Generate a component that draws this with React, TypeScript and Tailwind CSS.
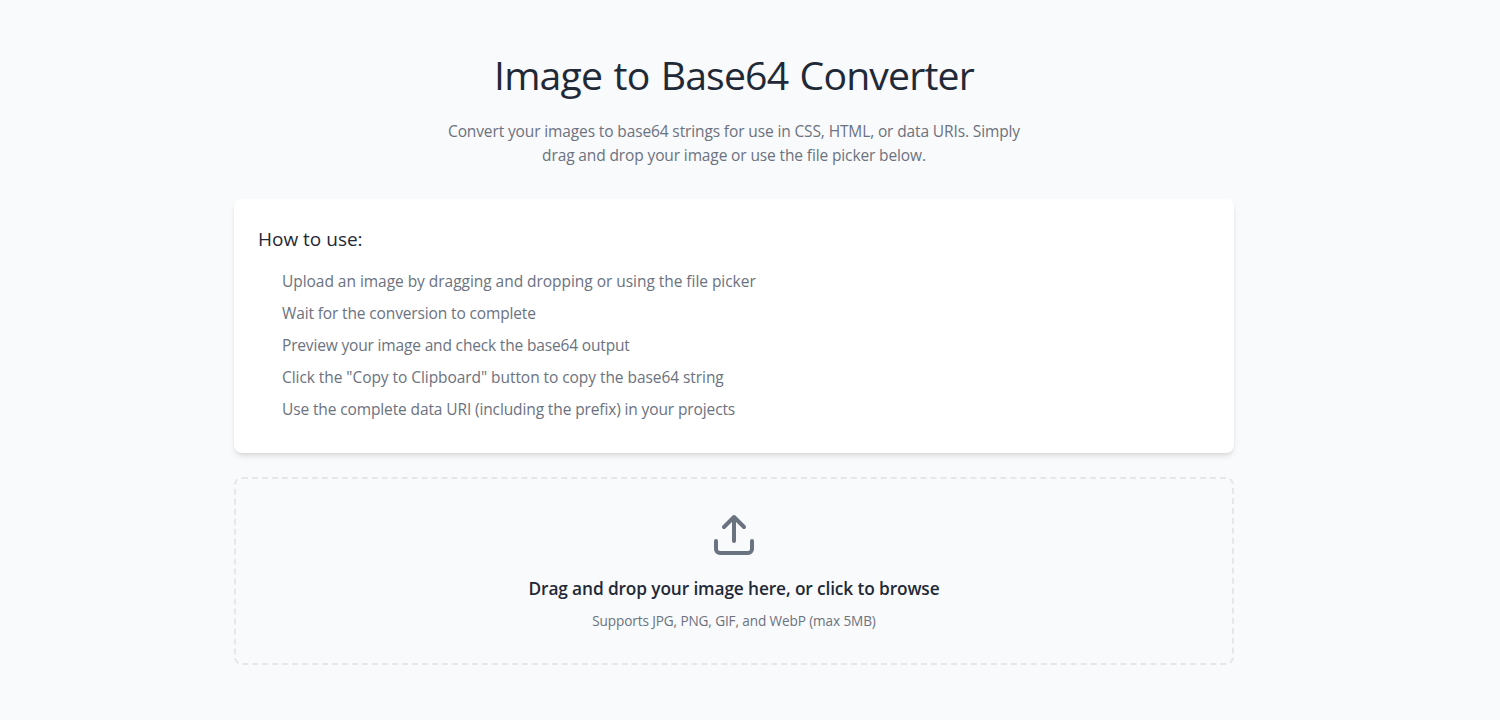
const steps = [
  { text: 'Upload an image by dragging and dropping or using the file picker', tracking: 'tracking-[-0.04px]' },
  { text: 'Wait for the conversion to complete', tracking: 'tracking-[-0.135px]' },
  { text: 'Preview your image and check the base64 output', tracking: 'tracking-[-0.163px]' },
  { text: 'Click the "Copy to Clipboard" button to copy the base64 string', tracking: 'tracking-[-0.06px]' },
  { text: 'Use the complete data URI (including the prefix) in your projects', tracking: 'tracking-[-0.12px]' },
];

export default function App() {
  return (
    <div className="min-h-screen bg-[#f9fafb] pr-8 font-['Segoe_UI','Open_Sans',sans-serif] text-[#1f2937]">
      <main className="mx-auto flex w-[1000px] flex-col pt-[47px]">
        <header className="flex flex-col items-center text-center">
          <h1 className="text-[39.2px] leading-[56px] tracking-[-0.84px] [word-spacing:2px]">Image to Base64 Converter</h1>
          <p className="mt-4 text-[15.5px] leading-6 tracking-[-0.125px] whitespace-nowrap text-[#6b7280]">
            Convert your images to base64 strings for use in CSS, HTML, or data URIs. Simply
            <br />
            drag and drop your image or use the file picker below.
          </p>
        </header>
        <section className="mt-8 h-[254px] rounded-lg bg-white p-6 shadow-md">
          <h2 className="text-[19px] leading-8">How to use:</h2>
          <ul className="mt-3.5 flex flex-col gap-2 pl-6 text-[15.5px] leading-6 text-[#6b7280]">
            {steps.map((step) => (
              <li key={step.text} className={step.tracking}>{step.text}</li>
            ))}
          </ul>
        </section>
        <section className="mt-6 flex h-[188px] flex-col items-center rounded-lg border-2 border-dashed border-[#e5e7eb] pt-8">
          <svg className="size-12 text-[#6b7280]" viewBox="0 0 24 24" fill="none" stroke="currentColor" strokeWidth="2" strokeLinecap="round" strokeLinejoin="round">
            <path d="M21 15v4a2 2 0 0 1-2 2H5a2 2 0 0 1-2-2v-4M17 8l-5-5-5 5M12 3v12" />
          </svg>
          <p className="mt-[17px] text-[17.3px] leading-[26px] font-semibold tracking-[-0.12px]">Drag and drop your image here, or click to browse</p>
          <p className="mt-2 text-[13.6px] leading-[22px] tracking-[-0.117px] text-[#6b7280]">Supports JPG, PNG, GIF, and WebP (max 5MB)</p>
        </section>
      </main>
    </div>
  );
}
